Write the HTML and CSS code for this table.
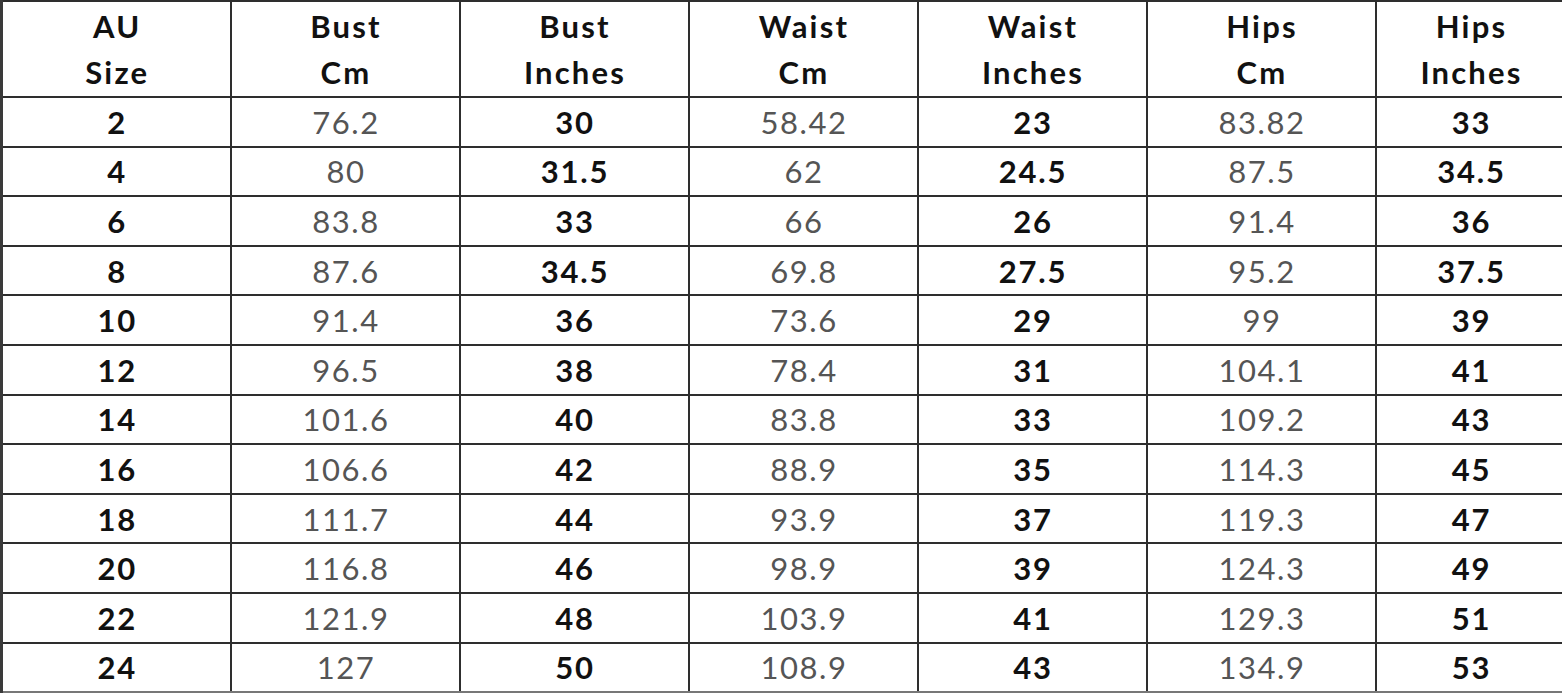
FILE: index.html
```html
<!DOCTYPE html>
<html>
<head>
<meta charset="utf-8">
<link rel="stylesheet" href="styles.css">
</head>
<body>
<table class="size-chart">
  <colgroup>
    <col class="c"><col class="c"><col class="c"><col class="c"><col class="c"><col class="c"><col class="c-last">
  </colgroup>
  <thead>
    <tr>
      <th>AU<br>Size</th>
      <th>Bust<br>Cm</th>
      <th>Bust<br>Inches</th>
      <th>Waist<br>Cm</th>
      <th>Waist<br>Inches</th>
      <th>Hips<br>Cm</th>
      <th>Hips<br>Inches</th>
    </tr>
  </thead>
  <tbody>
    <tr><td class="b">2</td><td>76.2</td><td class="b">30</td><td>58.42</td><td class="b">23</td><td>83.82</td><td class="b">33</td></tr>
    <tr><td class="b">4</td><td>80</td><td class="b">31.5</td><td>62</td><td class="b">24.5</td><td>87.5</td><td class="b">34.5</td></tr>
    <tr><td class="b">6</td><td>83.8</td><td class="b">33</td><td>66</td><td class="b">26</td><td>91.4</td><td class="b">36</td></tr>
    <tr><td class="b">8</td><td>87.6</td><td class="b">34.5</td><td>69.8</td><td class="b">27.5</td><td>95.2</td><td class="b">37.5</td></tr>
    <tr><td class="b">10</td><td>91.4</td><td class="b">36</td><td>73.6</td><td class="b">29</td><td>99</td><td class="b">39</td></tr>
    <tr><td class="b">12</td><td>96.5</td><td class="b">38</td><td>78.4</td><td class="b">31</td><td>104.1</td><td class="b">41</td></tr>
    <tr><td class="b">14</td><td>101.6</td><td class="b">40</td><td>83.8</td><td class="b">33</td><td>109.2</td><td class="b">43</td></tr>
    <tr><td class="b">16</td><td>106.6</td><td class="b">42</td><td>88.9</td><td class="b">35</td><td>114.3</td><td class="b">45</td></tr>
    <tr><td class="b">18</td><td>111.7</td><td class="b">44</td><td>93.9</td><td class="b">37</td><td>119.3</td><td class="b">47</td></tr>
    <tr><td class="b">20</td><td>116.8</td><td class="b">46</td><td>98.9</td><td class="b">39</td><td>124.3</td><td class="b">49</td></tr>
    <tr><td class="b">22</td><td>121.9</td><td class="b">48</td><td>103.9</td><td class="b">41</td><td>129.3</td><td class="b">51</td></tr>
    <tr><td class="b">24</td><td>127</td><td class="b">50</td><td>108.9</td><td class="b">43</td><td>134.9</td><td class="b">53</td></tr>
  </tbody>
</table>
</body>
</html>
```
FILE: styles.css
```css
html, body {
  margin: 0;
  padding: 0;
  background: #ffffff;
  overflow: hidden;
}
.size-chart {
  border-collapse: collapse;
  table-layout: fixed;
  width: 1564px;
  font-family: Lato, "Open Sans", sans-serif;
  font-size: 31px;
  color: #555555;
  border-top: 2px solid #3a3a3a;
  border-left: 3px solid #3a3a3a;
}
.c { width: 229px; }
.c-last { width: 190px; }
.size-chart th,
.size-chart td {
  border: 2px solid #2e2e2e;
  text-align: center;
  vertical-align: middle;
  padding: 0 0 0 2px;
}
.size-chart th {
  height: 94px;
  font-weight: 700;
  color: #111111;
  line-height: 46px;
  letter-spacing: 2.2px;
}
.size-chart td {
  height: 47.6px;
  line-height: 40px;
  font-weight: 400;
  letter-spacing: 1.6px;
}
.size-chart td.b {
  font-weight: 700;
  color: #111111;
  letter-spacing: 1.8px;
}
.size-chart tbody tr:last-child td {
  border-bottom-color: #777777;
}
```
